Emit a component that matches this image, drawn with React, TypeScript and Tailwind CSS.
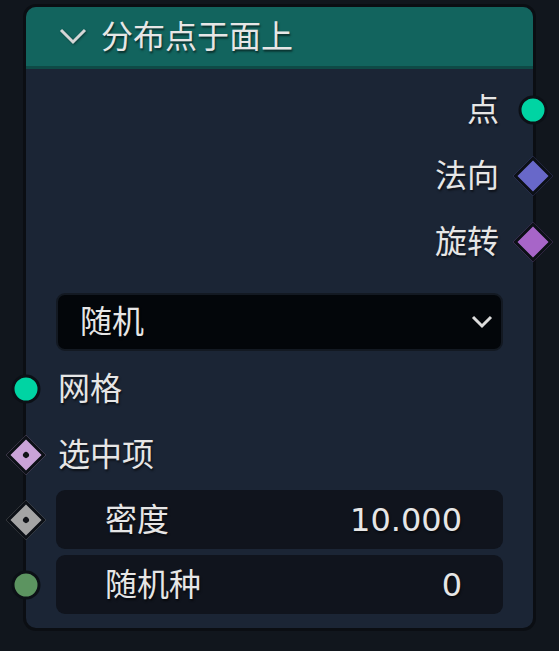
import React from 'react';

const font = { fontFamily: '"DejaVu Sans", "Noto Sans CJK SC", sans-serif' };

type SocketKind = 'circle' | 'diamond' | 'diamondDot';

function Socket({ kind, color, side }: { kind: SocketKind; color: string; side: 'left' | 'right' }) {
  const pos = side === 'left' ? 'left-0 -translate-x-1/2' : 'right-0 translate-x-1/2';
  if (kind === 'circle') {
    return (
      <span
        className={`absolute top-1/2 -translate-y-1/2 ${pos} w-[29px] h-[29px] rounded-full border-[3px] border-[#0c1016]`}
        style={{ backgroundColor: color }}
      />
    );
  }
  return (
    <span className={`absolute top-1/2 -translate-y-1/2 ${pos} w-[40px] h-[40px] flex items-center justify-center`}>
      <span
        className="w-[28px] h-[28px] rotate-45 border-[3px] border-[#0c1016] flex items-center justify-center"
        style={{ backgroundColor: color }}
      >
        {kind === 'diamondDot' && <span className="w-[6px] h-[6px] rounded-full bg-[#111318]" />}
      </span>
    </span>
  );
}

const label = 'text-[32px] leading-none text-[#e6e6e6] [text-shadow:1px_2px_2px_rgba(0,0,0,0.55)]';

function OutputRow({ text, kind, color }: { text: string; kind: SocketKind; color: string }) {
  return (
    <div className="relative h-[66px] flex items-center justify-end pr-[34px]">
      <span className={label}>{text}</span>
      <Socket kind={kind} color={color} side="right" />
    </div>
  );
}

function InputRow({ text, kind, color }: { text: string; kind: SocketKind; color: string }) {
  return (
    <div className="relative h-[66px] flex items-center pl-[32px]">
      <span className={label}>{text}</span>
      <Socket kind={kind} color={color} side="left" />
    </div>
  );
}

function FieldRow({ text, value, kind, color }: { text: string; value: string; kind: SocketKind; color: string }) {
  return (
    <div className="relative h-[59px] px-[30px]">
      <div className="h-full rounded-[9px] bg-[#10141d] flex items-center justify-between pl-[49px] pr-[41px]">
        <span className={label}>{text}</span>
        <span className={label}>{value}</span>
      </div>
      <Socket kind={kind} color={color} side="left" />
    </div>
  );
}

export default function App() {
  return (
    <div className="w-[559px] h-[651px] bg-[#11161d] overflow-hidden pt-[4px]" style={font}>
      <div className="ml-[23px] w-[513px] h-[627px] rounded-[13px] border-[3px] border-[#0b0e13] bg-[#1b2535] flex flex-col">
        {/* Header */}
        <div className="h-[62px] shrink-0 rounded-t-[10px] bg-[#12645e] border-b-[3px] border-[#0e4a46] flex items-center pl-[33px] gap-[14px]">
          <svg width="28" height="17" viewBox="0 0 28 17" className="drop-shadow-[1px_1px_1px_rgba(0,0,0,0.4)]">
            <polyline points="2,2 14,14 26,2" fill="none" stroke="#d4d6d6" strokeWidth="3" />
          </svg>
          <span className={label}>分布点于面上</span>
        </div>

        {/* Outputs */}
        <div className="pt-[8px]">
          <OutputRow text="点" kind="circle" color="#00d4a3" />
          <OutputRow text="法向" kind="diamond" color="#6868c9" />
          <OutputRow text="旋转" kind="diamond" color="#a765c8" />
        </div>

        {/* Mode dropdown */}
        <div className="px-[30px] mt-[18px]">
          <div className="h-[58px] rounded-[9px] bg-[#03060a] border-[2px] border-[#131922] flex items-center justify-between pl-[22px] pr-[8px]">
            <span className={label}>随机</span>
            <svg width="22" height="14" viewBox="0 0 22 14">
              <polyline points="2,2 11,11 20,2" fill="none" stroke="#dcdcdc" strokeWidth="3" />
            </svg>
          </div>
        </div>

        {/* Inputs */}
        <div className="mt-[5px]">
          <InputRow text="网格" kind="circle" color="#00d4a3" />
          <InputRow text="选中项" kind="diamondDot" color="#caa3d8" />
        </div>
        <div className="mt-[2px] flex flex-col gap-[6px]">
          <FieldRow text="密度" value="10.000" kind="diamondDot" color="#a4a4a4" />
          <FieldRow text="随机种" value="0" kind="circle" color="#5c9460" />
        </div>
      </div>
    </div>
  );
}
